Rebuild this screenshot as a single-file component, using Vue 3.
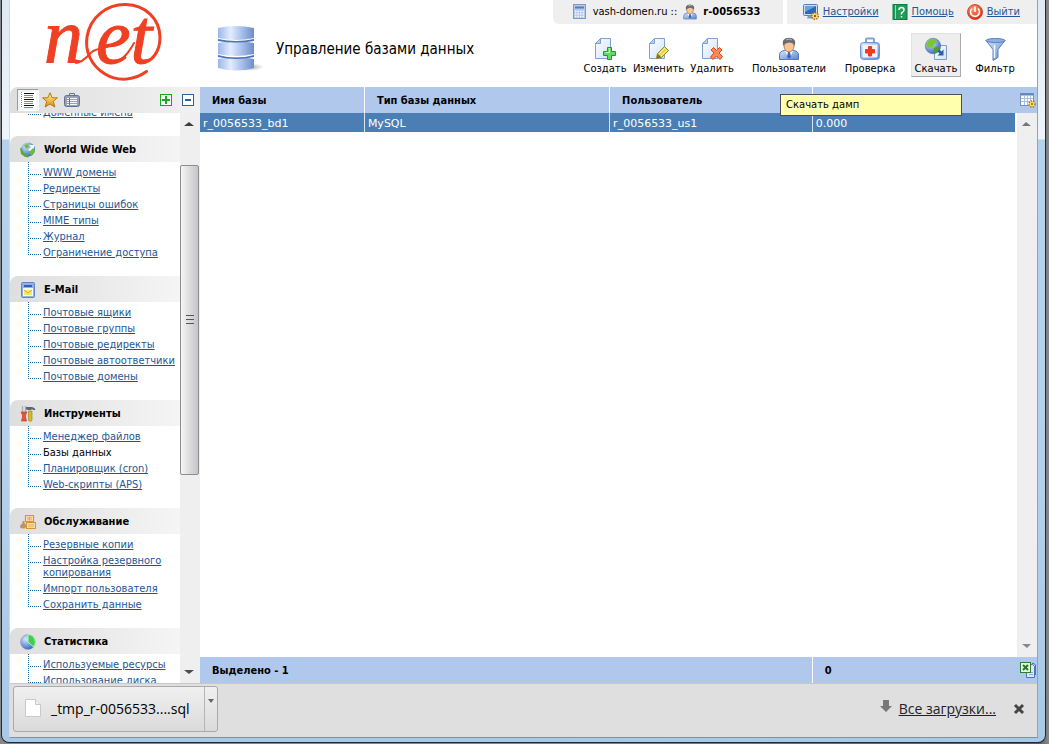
<script setup>
import { ref } from 'vue'

const sections = [
  {
    title: 'World Wide Web',
    icon: 'web',
    items: ['WWW домены', 'Редиректы', 'Страницы ошибок', 'MIME типы', 'Журнал', 'Ограничение доступа'],
  },
  {
    title: 'E-Mail',
    icon: 'mail',
    items: ['Почтовые ящики', 'Почтовые группы', 'Почтовые редиректы', 'Почтовые автоответчики', 'Почтовые домены'],
  },
  {
    title: 'Инструменты',
    icon: 'tools',
    items: ['Менеджер файлов', 'Базы данных', 'Планировщик (cron)', 'Web-скрипты (APS)'],
  },
  {
    title: 'Обслуживание',
    icon: 'service',
    items: ['Резервные копии', 'Настройка резервного копирования', 'Импорт пользователя', 'Сохранить данные'],
  },
  {
    title: 'Статистика',
    icon: 'stats',
    items: ['Используемые ресурсы', 'Использование диска'],
  },
]
const current = ref('Базы данных')

const actions = [
  { label: 'Создать', icon: 'create' },
  { label: 'Изменить', icon: 'edit' },
  { label: 'Удалить', icon: 'delete' },
  { label: 'Пользователи', icon: 'user', gap: true },
  { label: 'Проверка', icon: 'check', gap: true },
  { label: 'Скачать', icon: 'download', gap: true, active: true, tip: 'Скачать дамп' },
  { label: 'Фильтр', icon: 'filter', gap: true },
]

const links = [
  { label: 'Настройки', icon: 'settings' },
  { label: 'Помощь', icon: 'help' },
  { label: 'Выйти', icon: 'power' },
]

const rows = [{ name: 'r_0056533_bd1', type: 'MySQL', user: 'r_0056533_us1', size: '0.000' }]
</script>

<template>
  <div class="desktop">
    <svg class="sprite" aria-hidden="true">
      <defs>
        <linearGradient id="gBlue" x1="0" y1="0" x2="1" y2="1">
          <stop offset="0" stop-color="#d6e4fa" /><stop offset="1" stop-color="#5b86cf" />
        </linearGradient>
        <linearGradient id="gPage" x1="0" y1="0" x2="1" y2="1">
          <stop offset="0" stop-color="#ffffff" /><stop offset="1" stop-color="#cfe0f6" />
        </linearGradient>
        <linearGradient id="gDisk" x1="0" y1="0" x2="1" y2="0">
          <stop offset="0" stop-color="#9cb6ea" /><stop offset="0.35" stop-color="#e3ecfc" />
          <stop offset="0.65" stop-color="#a9c1ee" /><stop offset="1" stop-color="#6f8cc9" />
        </linearGradient>
        <linearGradient id="gGold" x1="0" y1="0" x2="0" y2="1">
          <stop offset="0" stop-color="#fff3a0" /><stop offset="1" stop-color="#e08a10" />
        </linearGradient>
        <radialGradient id="gGlobe" cx="0.35" cy="0.3" r="0.8">
          <stop offset="0" stop-color="#d5e6ff" /><stop offset="1" stop-color="#2c5fb8" />
        </radialGradient>
        <radialGradient id="gRed" cx="0.4" cy="0.3" r="0.8">
          <stop offset="0" stop-color="#ff9a70" /><stop offset="1" stop-color="#d5200c" />
        </radialGradient>
        <radialGradient id="gShade"><stop offset="0" stop-color="#777" stop-opacity="0.7" /><stop offset="1" stop-color="#777" stop-opacity="0" /></radialGradient>
      </defs>

      <symbol id="i-page" viewBox="0 0 24 24">
        <path d="M7.500 1.500H17.500V21.500H2.500V6.500Z" fill="url(#gPage)" stroke="#7da2d4" />
        <path d="M7.500 1.500V6.500H2.500Z" fill="#b7cff0" stroke="#7da2d4" />
      </symbol>
      <symbol id="i-create" viewBox="0 0 24 24">
        <use href="#i-page" />
        <path d="M14.500 10.500h4v4h4v4h-4v4h-4v-4h-4v-4h4Z" fill="#5fdb62" stroke="#1d9a2c" />
        <path d="M15.500 11.500h1v4h-4" fill="none" stroke="#c4f7c0" />
      </symbol>
      <symbol id="i-edit" viewBox="0 0 24 24">
        <use href="#i-page" />
        <path d="M9.500 21.500l1-5 7-7 4 4-7 7Z" fill="#e9d450" stroke="#9a8a1c" />
        <path d="M12 17l6-6M14 19l6-6" stroke="#fff29a" fill="none" />
        <path d="M9.500 21.500l1-5 4 4Z" fill="#7d7430" />
      </symbol>
      <symbol id="i-delete" viewBox="0 0 24 24">
        <use href="#i-page" />
        <path d="M11 13l2.500-2.500 3 3 3-3L22 13l-3 3 3.500 3.500-2.500 3-3.500-3.500L13 22.500 10.500 20l3.500-4Z" fill="#fb8a50" stroke="#d9481f" />
      </symbol>
      <symbol id="i-user" viewBox="0 0 24 24">
        <path d="M2.500 22.500V18q0-4 5-4.500h9q5 .5 5 4.500v4.500Z" fill="url(#gBlue)" stroke="#4c7ac4" />
        <path d="M8 14l4 8 4-8Z" fill="#fff" /><path d="M11 15h2l1 5-2 2-2-2Z" fill="#3867bd" />
        <ellipse cx="12" cy="9" rx="5" ry="6" fill="#f6c69b" stroke="#b77a4d" />
        <path d="M6 9Q4 1 12 .8 20 1 18 9 17 6 12.500 5.500 7.500 6 6 9Z" fill="#6c6c70" />
        <path d="M9 3q3-2 6 0" stroke="#b5b5b8" fill="none" />
      </symbol>
      <symbol id="i-check" viewBox="0 0 24 24">
        <path d="M8 6V2.500q0-1 1-1h6q1 0 1 1V6" fill="none" stroke="#84a2d3" stroke-width="2" />
        <rect x="2.500" y="5.500" width="19" height="17" rx="3" fill="url(#gBlue)" stroke="#6f96d2" />
        <rect x="4.500" y="7.500" width="15" height="13" rx="1" fill="#edf4ff" />
        <path d="M10.500 9.500h3v3h3v3.500h-3v3h-3v-3h-3v-3.500h3Z" fill="#f03a1c" stroke="#f03a1c" />
      </symbol>
      <symbol id="i-download" viewBox="0 0 24 24">
        <path d="M10.500 8.500h12v14h-12Z" fill="url(#gPage)" stroke="#7f9ccc" />
        <circle cx="9" cy="9" r="7.700" fill="url(#gGlobe)" stroke="#5070a8" stroke-width="0.6" />
        <path d="M4 4q3-3 7-2l2 3-3 2-1 3-4 1-3-3Z" fill="#7cc62e" /><path d="M10 11l4-2 1 3-3 4-3-1Z" fill="#4f9f2a" />
        <path d="M19.500 12.500v6h-6l2-2-2-2 2-2 2 2Z" fill="#2c5fa8" />
      </symbol>
      <symbol id="i-filter" viewBox="0 0 24 24">
        <path d="M3 3.500h19l-7 9v8l-5 3V12.500Z" fill="url(#gBlue)" stroke="#5a80bd" />
        <ellipse cx="12.500" cy="3.500" rx="9.500" ry="2" fill="#8fb0e2" stroke="#5a80bd" />
        <path d="M11.500 8v13" stroke="#f1f6ff" stroke-width="1.500" />
      </symbol>

      <symbol id="i-settings" viewBox="0 0 16 16">
        <rect x="0.500" y="0.500" width="14" height="11" rx="1" fill="#cfdcf0" stroke="#5f7dac" />
        <rect x="2" y="2" width="11" height="8" fill="#2d68b4" />
        <path d="M2 2h11L2 8Z" fill="#6da2dd" /><path d="M4 14.500h7l-1-3H5Z" fill="#7f99c2" />
        <circle cx="12" cy="12" r="3.300" fill="#ffe07a" stroke="#a87412" stroke-dasharray="1.500 1" stroke-width="1.500" />
        <circle cx="12" cy="12" r="1.200" fill="#8a6216" />
      </symbol>
      <symbol id="i-help" viewBox="0 0 16 16">
        <rect x="1" y="0.500" width="14" height="15" fill="#1f9d57" stroke="#117a3f" />
        <path d="M3.500 1v14" stroke="#8be0b0" />
        <path d="M7 6q0-2.500 2.500-2.500T12 6q0 1.500-2.500 3v1.500M9.500 12v1.500" fill="none" stroke="#fff" stroke-width="1.500" />
      </symbol>
      <symbol id="i-power" viewBox="0 0 16 16">
        <circle cx="8" cy="8" r="7.500" fill="url(#gRed)" stroke="#c43a1a" stroke-width="0.800" />
        <path d="M5 4.500a4.500 4.500 0 1 0 6 0M8 2.500v5.500" fill="none" stroke="#fff" stroke-width="1.600" />
      </symbol>
      <symbol id="i-domain" viewBox="0 0 16 16">
        <rect x="1.500" y="0.500" width="12" height="14" fill="#b4c9ec" stroke="#7e98c8" />
        <path d="M3 3.500h9" stroke="#5a7ab6" stroke-width="2" />
        <path d="M3 7.500h9M3 10h9M3 12.500h9" stroke="#f4f8ff" stroke-width="1.500" stroke-dasharray="1.500 1" />
      </symbol>

      <symbol id="i-web" viewBox="0 0 16 16">
        <circle cx="8" cy="7.500" r="7" fill="url(#gGlobe)" />
        <path d="M4 3l4-1 1 3-3 2ZM9 8l5-2 1 4-4 4Z" fill="#6cbf3a" />
        <path d="M0 6l1 6 4 3 4 .500-2-3q-4-1-5-6Z" fill="#55ad32" /><path d="M9 3l5 0 0 4-1-1-3 3-2-1 3-3Z" fill="#f4f9ff" />
      </symbol>
      <symbol id="i-mail" viewBox="0 0 16 16">
        <rect x="1.500" y="0.500" width="13" height="15" rx="1" fill="#8fb0e8" stroke="#5f86c8" />
        <rect x="4" y="3" width="8" height="2" fill="#355fae" /><rect x="3" y="6" width="10" height="8" fill="#f3f7ff" />
        <path d="M4 8h8v5H4Z" fill="#fbe668" /><path d="M4 8l4 3 4-3" fill="none" stroke="#c8ad48" />
      </symbol>
      <symbol id="i-tools" viewBox="0 0 16 16">
        <path d="M2.500 0v6M5.500 0v6" stroke="#a9adb5" stroke-width="1.300" />
        <path d="M1 6h6L5.500 9v2l1 4h-5l1-4V9Z" fill="#e6553a" stroke="#b83420" stroke-width="0.600" />
        <path d="M6 1h6q3 .5 3.500 3H13l-1-1-1 1H8L6 3.500Z" fill="#5c6675" />
        <path d="M8.500 5h3.500v9.500l-1.500 1-2-1Z" fill="#d3ba2b" stroke="#96811b" stroke-width="0.600" />
      </symbol>
      <symbol id="i-service" viewBox="0 0 16 16">
        <path d="M5.500 1.500h8v6h-8ZM6.500 8.500h9v6h-9Z" fill="#fbe7b8" stroke="#d8972c" stroke-width="1.200" />
        <path d="M8 2.500v4M9.500 2.500v4M11 2.500v4M9 9.500v4M11 9.500v4M13 9.500v4" stroke="#d8972c" stroke-width="0.800" />
        <path d="M2.500 7l2 0 0 2q2 1.500 1.500 4-.5 1.500-3 1.500-3 0-3-2Q0 10.500 2.500 9Z" fill="#b99474" />
      </symbol>
      <symbol id="i-stats" viewBox="0 0 16 16">
        <circle cx="8" cy="8" r="7.500" fill="url(#gGlobe)" stroke="#7c9bd0" stroke-width="0.600" />
        <path d="M8 .500A7.500 7.500 0 0 1 13.500 13L8 8Z" fill="#3fd04b" stroke="#dff6df" stroke-width="0.800" />
      </symbol>
    </svg>

    <div class="frame">
      <div class="page">
        <header class="top">
          <a class="logo" href="#" aria-label="net">
            <svg width="122" height="82" viewBox="42 0 122 82">
              <g fill="#ef4023" stroke="#ef4023" font-family="Liberation Serif, serif" font-style="italic" font-size="78">
                <text x="44" y="63">n</text><text x="96" y="63">et</text>
              </g>
              <g fill="none" stroke="#ef4023" stroke-linecap="round">
                <path d="M146.500 71.500C134 80.500 118 82 105 74 90 65 85 50 87 37 90 17 107 4 126 4.500c19 .5 34 14 34 33 0 15-9 26-20 25" stroke-width="3" />
                <path d="M76 63c8-1 12-8 17-12 8-4 16-3 22-8M108 63c10 1 18-5 26-20" stroke-width="2" />
              </g>
            </svg>
          </a>
          <div class="heading">
            <svg width="46" height="48" viewBox="0 0 46 48" aria-hidden="true">
              <ellipse cx="30" cy="42" rx="16" ry="4" fill="url(#gShade)" />
              <path d="M0 34q18-4 36 0v9q-18 5-36 0Z" fill="url(#gDisk)" />
              <path d="M0 30q18 5 36 0v2q-18 4-36 0Z" fill="#4f72b4" />
              <path d="M0 18q18-4 36 0v11q-18 4-36 0Z" fill="url(#gDisk)" />
              <path d="M0 14q18 4 36 0v2q-18 3-36 0Z" fill="#4f72b4" />
              <path d="M0 3q18-4 36 0v10q-18 4-36 0Z" fill="url(#gDisk)" />
            </svg>
            <h1>Управление базами данных</h1>
          </div>
          <div class="tools">
            <div class="account">
              <div class="who">
                <svg class="s16" aria-hidden="true"><use href="#i-domain" /></svg>
                <span>vash-domen.ru ::</span>
                <svg class="s16" aria-hidden="true"><use href="#i-user" /></svg>
                <b>r-0056533</b>
              </div>
              <nav class="links">
                <a v-for="l in links" :key="l.label" href="#">
                  <svg class="s16" aria-hidden="true"><use :href="'#i-' + l.icon" /></svg>
                  <span>{{ l.label }}</span>
                </a>
              </nav>
            </div>
            <div class="actions">
              <div v-for="a in actions" :key="a.label" class="action" :class="{ gap: a.gap }">
                <button type="button" :class="{ active: a.active }">
                  <svg class="s24" aria-hidden="true"><use :href="'#i-' + a.icon" /></svg>
                  {{ a.label }}
                </button>
                <span v-if="a.tip" class="tip" role="tooltip">{{ a.tip }}</span>
              </div>
            </div>
          </div>
        </header>

        <main class="main">
          <aside class="side">
            <div class="tabs">
              <button type="button" class="on" aria-label="Меню">
                <svg width="16" height="16" viewBox="0 0 16 16">
                  <rect width="16" height="16" fill="#fff" />
                  <path d="M1.500 0v16" stroke="#888" stroke-dasharray="1 1" />
                  <path d="M4 1.500h10M4 7.500h10M4 13.500h10" stroke="#111" />
                  <path d="M4 3.500h9M4 5.500h9M4 9.500h9M4 11.500h9M4 15.500h9" stroke="#6a8db5" />
                </svg>
              </button>
              <button type="button" aria-label="Избранное">
                <svg width="16" height="16" viewBox="0 0 16 16">
                  <path d="M8 .800l2.200 5h5.200l-4.100 3.600 1.500 5.600L8 12l-4.800 3 1.500-5.600L.6 5.800h5.200Z" fill="url(#gGold)" stroke="#b5780c" />
                </svg>
              </button>
              <button type="button" aria-label="История">
                <svg width="16" height="16" viewBox="0 0 16 16">
                  <path d="M5.500 4V1.500h5V4" fill="none" stroke="#60738f" />
                  <rect x="0.500" y="3.500" width="15" height="11" rx="2" fill="#8fa3be" stroke="#60738f" />
                  <path d="M3 6.500h10M3 8.500h10M3 10.500h10M3 12.500h10" stroke="#f5f8fc" /><path d="M5.500 6v7" stroke="#60738f" />
                </svg>
              </button>
              <span class="grow"></span>
              <button type="button" aria-label="Развернуть">
                <svg width="12" height="12" viewBox="0 0 12 12">
                  <rect x="0.500" y="0.500" width="11" height="11" fill="#fff" stroke="#1aa51f" /><path d="M2 6h8M6 2v8" stroke="#18a81d" stroke-width="2" />
                </svg>
              </button>
              <button type="button" class="minus" aria-label="Свернуть">
                <svg width="12" height="12" viewBox="0 0 12 12">
                  <rect x="0.500" y="0.500" width="11" height="11" fill="#fff" stroke="#2b5f9e" /><path d="M3 6h6" stroke="#2b5f9e" stroke-width="2" />
                </svg>
              </button>
            </div>
            <div class="scroller">
              <nav class="menu">
                <section class="scrolled">
                  <ul><li><a href="#">Доменные имена</a></li></ul>
                </section>
                <section v-for="s in sections" :key="s.title">
                  <h2><svg class="s16" aria-hidden="true"><use :href="'#i-' + s.icon" /></svg>{{ s.title }}</h2>
                  <ul>
                    <li v-for="i in s.items" :key="i">
                      <a href="#" :class="{ current: i === current }">{{ i }}</a>
                    </li>
                  </ul>
                </section>
              </nav>
              <div class="bar">
                <svg class="arrow" viewBox="0 0 20 20" aria-hidden="true"><path d="M4 13l5-4 5 4Z" fill="#3d3d3d" /></svg>
                <div class="track"><div class="thumb"><i></i><i></i><i></i></div></div>
                <svg class="arrow" viewBox="0 0 20 20" aria-hidden="true"><path d="M4 7l5 4 5-4Z" fill="#4d4d4d" /></svg>
              </div>
            </div>
          </aside>

          <div class="grid">
            <table>
              <colgroup><col class="c1" /><col class="c2" /><col class="c3" /><col /><col class="c5" /></colgroup>
              <thead>
                <tr>
                  <th>Имя базы</th><th>Тип базы данных</th><th>Пользователь</th><th class="open"></th>
                  <th class="corner">
                    <button type="button" aria-label="Колонки">
                      <svg width="16" height="16" viewBox="0 0 16 16">
                        <rect x="0.500" y="1.500" width="13" height="12" fill="#fff" stroke="#7191c8" /><path d="M1 2.500h12" stroke="#5d83c4" stroke-width="2" />
                        <path d="M1 6.500h12M1 9.500h12M4.500 3v10M7.500 3v10M10.500 3v10" stroke="#a9bfe2" />
                        <circle cx="12" cy="12" r="3" fill="#ffe07a" stroke="#b1801c" stroke-width="1.600" stroke-dasharray="1.500 1" /><circle cx="12" cy="12" r="1" fill="#8a6216" />
                      </svg>
                    </button>
                  </th>
                </tr>
              </thead>
              <tbody>
                <tr v-for="(r, n) in rows" :key="r.name" class="row">
                  <td>{{ r.name }}</td><td>{{ r.type }}</td><td>{{ r.user }}</td><td class="open">{{ r.size }}</td>
                  <td v-if="n === 0" class="vscroll" :rowspan="rows.length + 1">
                    <div>
                      <svg class="arrow" viewBox="0 0 20 20" aria-hidden="true"><path d="M5 13l4-4 5 4Z" fill="#777" /></svg>
                      <svg class="arrow" viewBox="0 0 20 20" aria-hidden="true"><path d="M5 7l5 4 4-4Z" fill="#888" /></svg>
                    </div>
                  </td>
                </tr>
                <tr class="filler"><td colspan="4"></td></tr>
              </tbody>
              <tfoot>
                <tr>
                  <td colspan="3">Выделено - 1</td><td class="open">0</td>
                  <td class="corner">
                    <button type="button" aria-label="Экспорт в Excel">
                      <svg width="16" height="16" viewBox="0 0 16 16">
                        <path d="M6.500 2.500h6l2 2v11h-8Z" fill="#dbe8fb" stroke="#4b74b8" /><path d="M9 12.500h4M9 10.500h4" stroke="#8aa9da" />
                        <path d="M12 1.500h2l1.500 1.500v10" fill="none" stroke="#4b74b8" />
                        <rect x="0.500" y="0.500" width="10" height="10" fill="#e9f6e5" stroke="#2f7d2f" /><path d="M3 3l5 5M8 3L3 8" stroke="#237a25" stroke-width="2" />
                      </svg>
                    </button>
                  </td>
                </tr>
              </tfoot>
            </table>
          </div>
        </main>

        <footer class="downloads">
          <div class="file">
            <button type="button" class="open-file">
              <svg width="16" height="20" viewBox="0 0 16 20" aria-hidden="true"><path d="M.500 .500h10l5 5v12H.500Z" fill="#fff" stroke="#c9c9c9" /><path d="M10.500 .500v5h5" fill="#eee" stroke="#c9c9c9" /></svg>
              _tmp_r-0056533....sql
            </button>
            <button type="button" class="more" aria-label="Действия">
              <svg width="6" height="4" viewBox="0 0 6 4"><path d="M0 0h6L3 4Z" fill="#666" /></svg>
            </button>
          </div>
          <a href="#" class="all">
            <svg width="12" height="14" viewBox="0 0 12 14" aria-hidden="true"><path d="M3 1h6v6h3L6 13 0 7h3Z" fill="#777" /></svg>
            <span>Все загрузки...</span>
          </a>
          <button type="button" class="close" aria-label="Закрыть">
            <svg width="12" height="12" viewBox="0 0 12 12"><path d="M2 2l8 8M10 2L2 10" stroke="#444" stroke-width="3" /></svg>
          </button>
        </footer>
      </div>
    </div>
  </div>
</template>

<style>
html,
body {
  margin: 0;
  background: #777;
}
</style>

<style scoped>
* {
  box-sizing: border-box;
}
.sprite {
  position: absolute;
  width: 0;
  height: 0;
}
.desktop {
  height: 100vh;
  padding: 0 3px 1px 1px;
  background: linear-gradient(90deg, #85878a 50%, #5b5b5d 99%, #8a8a8a);
  font: 11px/12px "DejaVu Sans Condensed", "DejaVu Sans", sans-serif;
  font-stretch: condensed;
  color: #000;
}
.frame {
  height: 100%;
  padding: 0 7px 4px 7px;
  border: 1px solid #1d2b3c;
  border-top: 0;
  border-radius: 0 0 8px 8px;
  background: linear-gradient(#dfe9f3 0, #eef4fa 139px, #b4d1ed 140px, #b4d0ec 60%, #a9c9e6);
}
.page {
  height: 100%;
  display: flex;
  flex-direction: column;
  background: #fff;
  border-left: 1px solid #cfdbe6;
  border-right: 1px solid #8aa5bd;
  border-bottom: 1px solid #7b93a8;
}
button {
  margin: 0;
  padding: 0;
  border: 0;
  background: none;
  font: inherit;
  color: inherit;
  display: flex;
  align-items: center;
}
a {
  color: #1d5796;
}
svg {
  display: block;
  flex: none;
}
.s16 {
  width: 16px;
  height: 16px;
}
.s24 {
  width: 24px;
  height: 24px;
}

.top {
  flex: none;
  height: 87px;
  display: flex;
}
.logo {
  width: 208px;
  padding-left: 32px;
}
.heading {
  flex: 1;
  display: flex;
  align-items: center;
  gap: 12px;
  padding-top: 11px;
}
h1 {
  margin: 0;
  font-size: 15px;
  line-height: 20px;
  font-weight: 400;
}
.tools {
  display: flex;
  flex-direction: column;
  align-items: flex-end;
}
.account {
  display: flex;
  gap: 4px;
  height: 24px;
}
.who,
.links,
.links a {
  display: flex;
  align-items: center;
}
.who {
  gap: 5px;
  width: 230px;
  padding-left: 19px;
  background: #efefef;
  border-radius: 0 0 0 6px;
}
.links {
  gap: 13px;
  padding: 0 17px 0 16px;
  background: #efefef;
}
.links a {
  gap: 4px;
}
.actions {
  display: grid;
  grid-template-columns: 50px 57px 50px 92px 70px 62px 56px;
  padding: 9px 20px 0 0;
  font-family: "DejaVu Sans", sans-serif;
  font-stretch: normal;
  font-size: 10px;
  white-space: nowrap;
}
.action {
  position: relative;
}
.action.gap {
  margin-left: 12px;
}
.action button {
  flex-direction: column;
  width: 100%;
  height: 44px;
  padding: 3px 0 0;
  gap: 2px;
  border: 1px solid transparent;
}
.action button.active {
  background: #eee;
  border-color: #e2e2e2 #aaa #aaa #e2e2e2;
}
.tip {
  position: absolute;
  z-index: 2;
  top: 61px;
  right: -1px;
  width: 182px;
  padding: 4px 5px;
  border: 1px solid #4a4f55;
  background: #ffffad;
}

.main {
  flex: 1;
  min-height: 0;
  display: flex;
}
.side {
  flex: none;
  width: 190px;
  display: flex;
  flex-direction: column;
}
.tabs {
  flex: none;
  height: 26px;
  display: flex;
  align-items: center;
  gap: 6px;
  padding: 0 6px 0 7px;
  border-radius: 8px 0 0 0;
  background: linear-gradient(90deg, #dedede, #f1f1f1);
}
.tabs .on {
  margin-right: -3px;
  padding: 2px;
  border: 1px solid #aaa;
  border-color: #999 #fff #fff #999;
  background: #f4f4f4;
}
.tabs .minus {
  margin-left: 4px;
}
.grow {
  flex: 1;
}
.scroller {
  flex: 1;
  min-height: 0;
  display: flex;
}
.menu {
  width: 170px;
  overflow: hidden;
}
.scrolled {
  margin-top: -11px;
}
h2 {
  display: flex;
  align-items: center;
  gap: 8px;
  height: 26px;
  margin: 0;
  padding: 2px 0 0 10px;
  border-radius: 8px 0 0 0;
  background: linear-gradient(90deg, #dedede, #f5f5f5);
  font-size: 11px;
  font-weight: 700;
}
ul {
  list-style: none;
  margin: 0 0 16px;
  padding: 2px 0 0 18px;
  background: repeating-linear-gradient(#1d66a0 0 1px, transparent 1px 2px) 18px 0 / 1px 3px no-repeat;
}
li {
  padding: 3px 0 1px 15px;
  background:
    repeating-linear-gradient(90deg, #1d66a0 0 1px, transparent 1px 2px) 0 10px / 13px 1px no-repeat,
    repeating-linear-gradient(#1d66a0 0 1px, transparent 1px 2px) 0 0 / 1px 100% no-repeat;
}
li:last-child {
  background-size: 13px 1px, 1px 10px;
}
li a {
  display: block;
  width: fit-content;
  max-width: 134px;
}
li a.current {
  color: #000;
  text-decoration: none;
}
.bar {
  width: 20px;
  display: flex;
  flex-direction: column;
  background: #efefef;
}
.arrow {
  width: 20px;
  height: 20px;
}
.track {
  flex: 1;
  display: grid;
  grid-template-rows: 6fr 58.5fr 35.5fr;
}
.thumb {
  grid-row: 2;
  display: flex;
  flex-direction: column;
  align-items: center;
  justify-content: center;
  gap: 3px;
  margin-right: 1px;
  border: 1px solid #8e8e8e;
  border-radius: 2px;
  background: linear-gradient(90deg, #f6f6f6, #dcdcdf 50%, #c4c5c9);
}
.thumb i {
  width: 8px;
  height: 1px;
  background: #555;
}

.grid {
  flex: 1;
  min-width: 0;
}
table {
  width: 100%;
  height: 100%;
  table-layout: fixed;
  border-collapse: separate;
  border-spacing: 0;
}
.c1 {
  width: 19.7%;
}
.c2 {
  width: 29.3%;
}
.c3 {
  width: 24.2%;
}
.c5 {
  width: 22px;
}
th,
td {
  padding: 0 3px;
  text-align: left;
}
thead tr,
tfoot tr {
  height: 26px;
  background: #afc8ec;
  font-weight: 700;
}
thead th,
tfoot td {
  padding: 2px 12px 0;
  border-right: 1px solid #fff;
}
.row {
  height: 19px;
  font-family: "DejaVu Sans", sans-serif;
  font-stretch: normal;
  color: #fff;
}
.row td {
  padding-top: 2px;
  background: #4b7eb5;
  border-right: 1px solid #d7e4f3;
}
thead .open,
tfoot .open,
.row .open {
  border-right: 0;
}
thead .corner,
tfoot .corner {
  padding: 0 0 0 5px;
  border-right: 0;
}
.row .vscroll {
  position: relative;
  padding: 0;
  border-right: 0;
  border-left: 2px solid #fff;
  background: #efefef;
}
.vscroll div {
  position: absolute;
  inset: 0;
  display: flex;
  flex-direction: column;
  justify-content: space-between;
}

.downloads {
  flex: none;
  height: 54px;
  display: flex;
  align-items: center;
  padding: 2px 12px 5px 3px;
  border-top: 1px solid #c8c8c8;
  background: #dfdfdf;
  font-family: "Open Sans", "Noto Sans", sans-serif;
  font-stretch: normal;
  font-size: 14px;
  line-height: 20px;
}
.file {
  display: flex;
  align-items: stretch;
  height: 46px;
  border: 1px solid #aaa;
  border-radius: 3px;
  background: linear-gradient(#f0f0f0, #dadada);
}
.open-file {
  gap: 10px;
  padding: 0 14px 0 11px;
}
.more {
  align-items: flex-start;
  padding: 12px 3px 0;
  border-left: 1px solid #b5b5b5;
}
.all {
  display: flex;
  align-items: flex-start;
  gap: 7px;
  margin-left: auto;
  color: #222;
}
.close {
  margin-left: 17px;
}
</style>
